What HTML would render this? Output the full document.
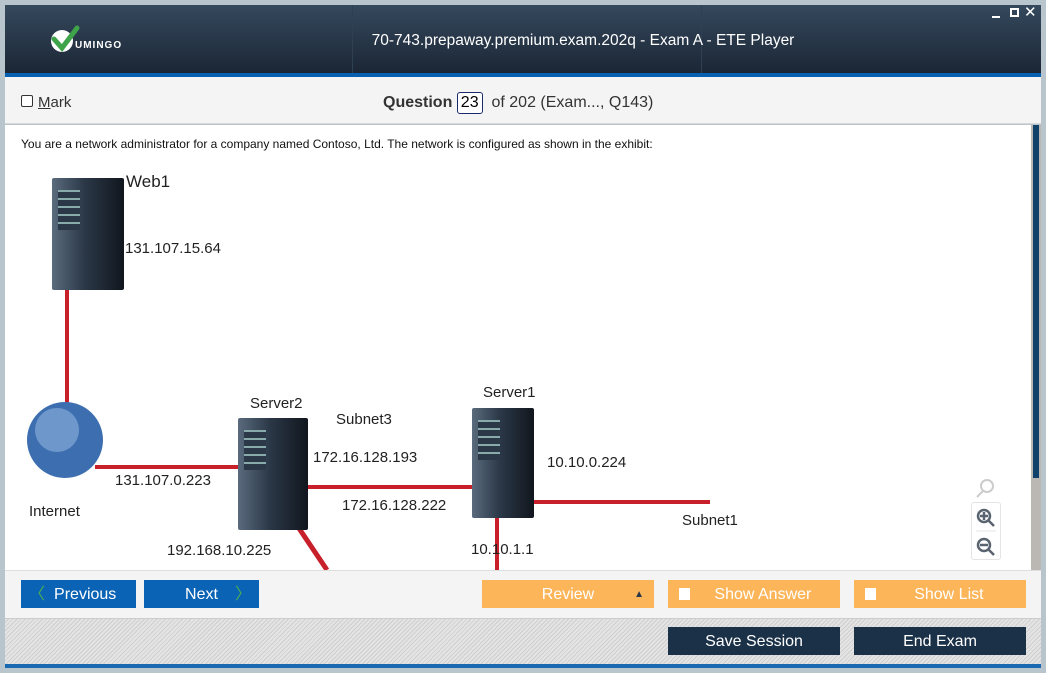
<!DOCTYPE html>
<html><head><meta charset="utf-8"><style>
*{margin:0;padding:0;box-sizing:border-box}
body{width:1046px;height:673px;background:#b9c5cc;position:relative;overflow:hidden;font-family:"Liberation Sans","DejaVu Sans",sans-serif}
.abs{position:absolute}
.hdr{left:5px;top:5px;width:1036px;height:68px;background:linear-gradient(#35495d,#1b2635)}
.blue{left:5px;top:73px;width:1036px;height:4px;background:#0860b0}
.tb{left:5px;top:77px;width:1036px;height:47px;background:#f4f4f4;border-bottom:1px solid #d8d8d8}
.cont{left:5px;top:125px;width:1026px;height:445px;background:#fff;overflow:hidden}
.nav{left:5px;top:570px;width:1036px;height:48px;background:#f4f4f4;border-top:1px solid #ddd}
.hatch{left:5px;top:618px;width:1036px;height:46px;background:repeating-linear-gradient(135deg,#e4e4e4 0 2px,#cfcfcf 2px 3px);border-top:1px solid #ccc}
.btn{position:absolute;height:28px;color:#fff;font-size:16px;line-height:30px;text-align:center}
.srv{position:absolute;background:linear-gradient(90deg,#5a6b7d,#2b3848 45%,#11161d);border-radius:2px}
.srv:before{content:"";position:absolute;left:6px;top:12px;width:22px;height:40px;background:repeating-linear-gradient(#8aa 0 2px,#2b3848 2px 8px)}
.lbl{position:absolute;font-size:15px;color:#222}
</style></head><body>
<div class="abs hdr"></div>
<div class="abs" style="left:352px;top:5px;width:1px;height:68px;background:#2f4052"></div>
<div class="abs" style="left:701px;top:5px;width:1px;height:68px;background:#2f4052"></div>
<svg class="abs" style="left:50px;top:24px" width="30" height="30" viewBox="0 0 30 30"><circle cx="12" cy="17" r="11" fill="#fff"/><path d="M4 15 L12 24 L27 4" stroke="#3fa34a" stroke-width="5" fill="none" stroke-linecap="round"/></svg>
<div class="abs" style="left:75px;top:40px;color:#fff;font-size:10px;font-weight:bold;letter-spacing:1px">UMINGO</div>
<div class="abs" style="left:353px;top:32px;width:460px;text-align:center;color:#fff;font-size:15.5px">70-743.prepaway.premium.exam.202q - Exam A - ETE Player</div>
<div class="abs" style="left:992px;top:16px;width:8px;height:2px;background:#fff"></div>
<div class="abs" style="left:1010px;top:8px;width:9px;height:9px;border:2px solid #fff"></div>
<div class="abs" style="left:1024px;top:3px;color:#fff;font-size:15px;font-weight:bold">✕</div>
<div class="abs blue"></div>
<div class="abs tb"></div>
<div class="abs" style="left:21px;top:95px;width:12px;height:12px;border:1px solid #333;border-radius:2px;background:#fff"></div>
<div class="abs" style="left:38px;top:94px;font-size:15px;color:#333"><u>M</u>ark</div>
<div class="abs" style="left:383px;top:92px;font-size:16px;color:#333"><b>Question</b> <span style="display:inline-block;border:1px solid #1a2a6a;border-radius:3px;padding:1px 3px;color:#000;background:#fff">23</span>&nbsp; of 202 (Exam..., Q143)</div>
<div class="abs cont">
<div class="abs" style="left:16px;top:12px;font-size:12px;color:#111">You are a network administrator for a company named Contoso, Ltd. The network is configured as shown in the exhibit:</div>
<svg class="abs" style="left:0;top:0" width="1026" height="445">
<g stroke="#c8202a" stroke-width="4" fill="none">
<line x1="62" y1="160" x2="62" y2="285"/><line x1="90" y1="342" x2="235" y2="342"/>
<line x1="300" y1="362" x2="470" y2="362"/><line x1="525" y1="377" x2="705" y2="377"/>
<line x1="492" y1="385" x2="492" y2="445"/><line x1="275" y1="375" x2="322" y2="445" stroke-width="5"/>
</g>
<circle cx="60" cy="315" r="38" fill="#3d6fb0"/><circle cx="52" cy="305" r="22" fill="#8fb4de" opacity=".6"/>
<g fill="none" stroke="#5a6470" stroke-width="2.5">
<circle cx="979" cy="391" r="6"/><line x1="983" y1="395" x2="989" y2="401"/>
<circle cx="979" cy="420" r="6"/><line x1="983" y1="424" x2="989" y2="430"/>
</g>
<g stroke="#5a6470" stroke-width="2.5"><line x1="975" y1="391" x2="983" y2="391"/><line x1="979" y1="387" x2="979" y2="395"/><line x1="975" y1="420" x2="983" y2="420"/></g>
<g fill="none" stroke="#ccc" stroke-width="2"><circle cx="982" cy="361" r="6"/><line x1="978" y1="366" x2="972" y2="372"/></g>
<line x1="971" y1="406" x2="991" y2="406" stroke="#e4e4e4"/>
</svg>
<div class="srv" style="left:47px;top:53px;width:72px;height:112px"></div>
<div class="srv" style="left:233px;top:293px;width:70px;height:112px"></div>
<div class="srv" style="left:467px;top:283px;width:62px;height:110px"></div>
<div class="lbl" style="left:121px;top:47px;font-size:17px">Web1</div>
<div class="lbl" style="left:120px;top:115px">131.107.15.64</div>
<div class="lbl" style="left:245px;top:270px">Server2</div>
<div class="lbl" style="left:331px;top:286px">Subnet3</div>
<div class="lbl" style="left:478px;top:259px">Server1</div>
<div class="lbl" style="left:308px;top:324px">172.16.128.193</div>
<div class="lbl" style="left:542px;top:329px">10.10.0.224</div>
<div class="lbl" style="left:110px;top:347px">131.107.0.223</div>
<div class="lbl" style="left:337px;top:372px">172.16.128.222</div>
<div class="lbl" style="left:24px;top:378px">Internet</div>
<div class="lbl" style="left:677px;top:387px">Subnet1</div>
<div class="lbl" style="left:162px;top:417px">192.168.10.225</div>
<div class="lbl" style="left:466px;top:416px">10.10.1.1</div>
<div class="abs" style="left:966px;top:377px;width:30px;height:58px;border:1px solid #e4e4e4;border-radius:3px"></div>
</div>
<div class="abs" style="left:1031px;top:125px;width:10px;height:445px;background:#bbb8b4"></div>
<div class="abs" style="left:1033px;top:125px;width:6px;height:353px;background:#10416b"></div>
<div class="abs nav"></div>
<div class="btn" style="left:21px;top:580px;width:115px;background:#0b63b5"><span style="color:#4caf50;position:absolute;left:8px">〈</span>&nbsp;&nbsp;&nbsp;Previous</div>
<div class="btn" style="left:144px;top:580px;width:115px;background:#0b63b5">Next<span style="color:#4caf50;position:absolute;right:8px">〉</span></div>
<div class="btn" style="left:482px;top:580px;width:172px;background:#fdb55a">Review<span style="position:absolute;right:10px;color:#2b3848;font-size:10px">▲</span></div>
<div class="btn" style="left:668px;top:580px;width:172px;background:#fdb55a"><span style="position:absolute;left:11px;top:8px;width:11px;height:12px;background:#fff"></span>&nbsp;&nbsp;&nbsp;&nbsp;Show Answer</div>
<div class="btn" style="left:854px;top:580px;width:172px;background:#fdb55a"><span style="position:absolute;left:11px;top:8px;width:11px;height:12px;background:#fff"></span>&nbsp;&nbsp;&nbsp;&nbsp;Show List</div>
<div class="abs hatch"></div>
<div class="btn" style="left:668px;top:627px;width:172px;background:#1b3148">Save Session</div>
<div class="btn" style="left:854px;top:627px;width:172px;background:#1b3148">End Exam</div>
<div class="abs" style="left:5px;top:664px;width:1036px;height:4px;background:#1a68b0"></div>
</body></html>
